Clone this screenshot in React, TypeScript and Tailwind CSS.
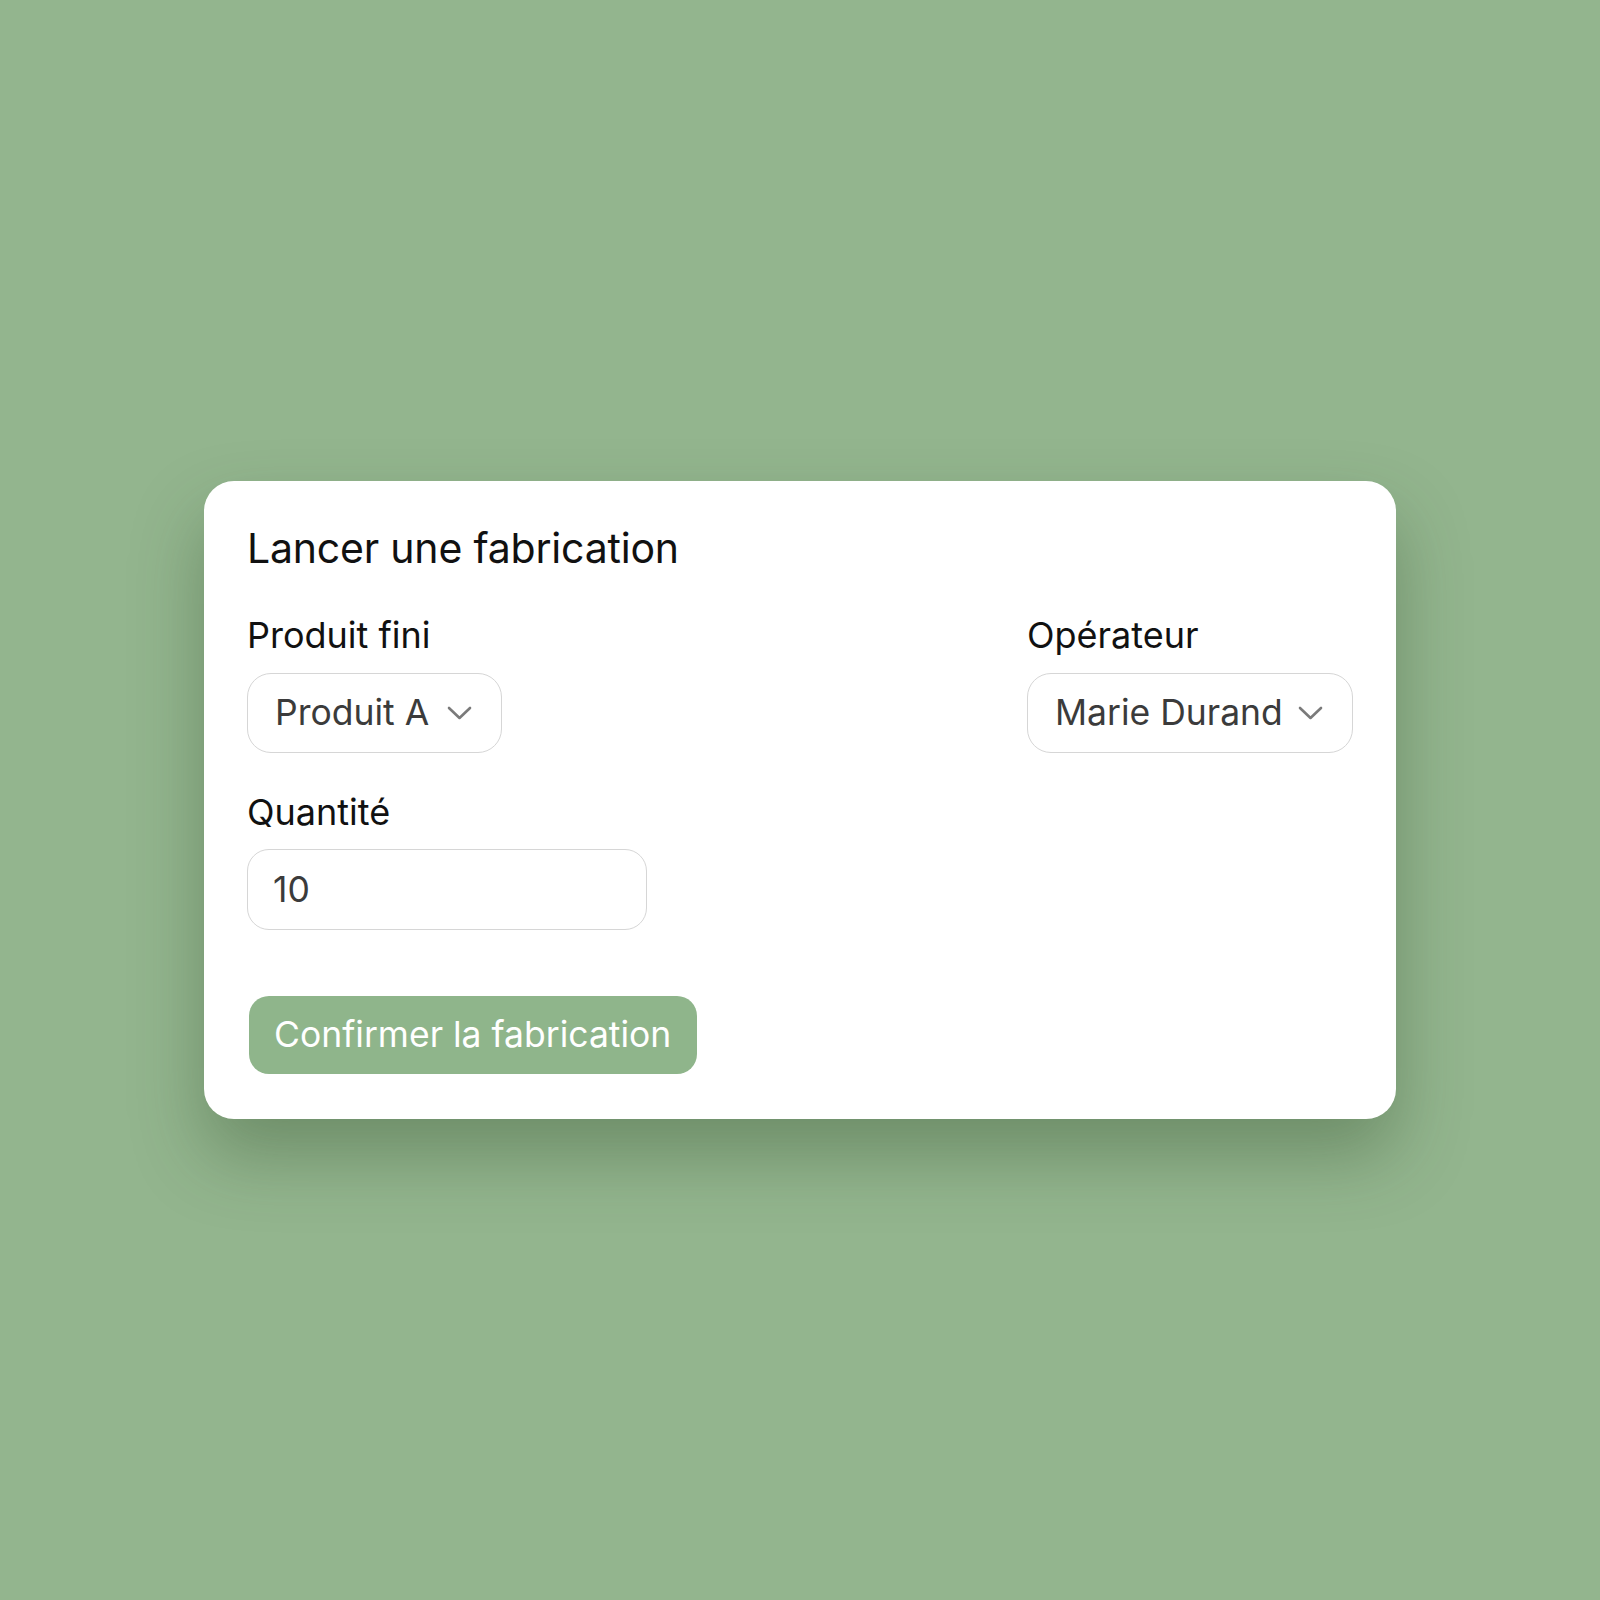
import React from "react";

function Chevron() {
  return (
    <svg width="25" height="14" viewBox="0 0 25 14" fill="none" className="shrink-0">
      <path d="M2 2l10.5 10L23 2" stroke="#7a7a7a" strokeWidth="2.6" strokeLinecap="round" strokeLinejoin="round" />
    </svg>
  );
}

function SelectBox({ value, width }: { value: string; width: string }) {
  return (
    <div className={`${width} h-[80px] flex items-center justify-between pl-[27px] pr-[29px] rounded-[24px] border-[1.5px] border-[#d6d6d6] bg-white`}>
      <span className="text-[35.5px] text-[#3b3b3b] leading-none">{value}</span>
      <Chevron />
    </div>
  );
}

export default function App() {
  return (
    <div
      className="min-h-screen w-full flex items-center justify-center bg-[#93b58e]"
      style={{ fontFamily: "Inter, 'Noto Sans', 'Liberation Sans', sans-serif" }}
    >
      <div className="w-[1192px] h-[638px] bg-white rounded-[30px] px-[43px] pt-[42px] shadow-[0_36px_70px_rgba(40,70,35,0.35)]">
        <h1 className="text-[41px] leading-[50px] text-[#111] font-normal tracking-[-0.2px]">
          Lancer une fabrication
        </h1>

        <div className="mt-[41px] flex justify-between">
          <div className="flex flex-col">
            <label className="text-[36px] leading-[43px] text-[#111]">Produit fini</label>
            <div className="mt-[16px]">
              <SelectBox value="Produit A" width="w-[255px]" />
            </div>
          </div>
          <div className="flex flex-col">
            <label className="text-[36px] leading-[43px] text-[#111]">Opérateur</label>
            <div className="mt-[16px]">
              <SelectBox value="Marie Durand" width="w-[326px]" />
            </div>
          </div>
        </div>

        <div className="mt-[38px] flex flex-col">
          <label className="text-[36px] leading-[43px] text-[#111]">Quantité</label>
          <div className="mt-[15px] w-[400px] h-[81px] flex items-center pl-[25px] rounded-[22px] border-[1.5px] border-[#d6d6d6]">
            <span className="text-[35.5px] text-[#3b3b3b] leading-none">10</span>
          </div>
        </div>

        <button className="mt-[66px] ml-[2px] w-[448px] h-[78px] rounded-[20px] bg-[#8fb58b] text-white text-[35.5px] leading-none flex items-center pl-[25px]">
          Confirmer la fabrication
        </button>
      </div>
    </div>
  );
}
